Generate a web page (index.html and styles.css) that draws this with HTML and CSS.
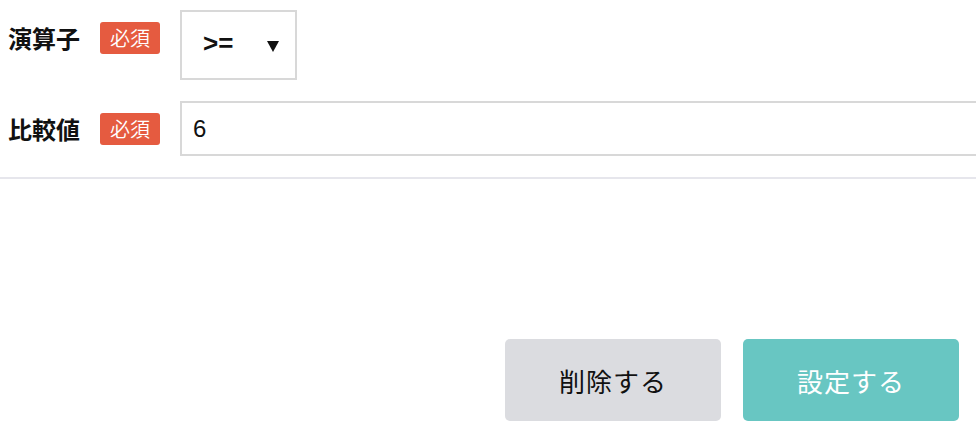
FILE: index.html
```html
<!DOCTYPE html>
<html lang="ja">
<head>
<meta charset="utf-8">
<title>条件設定</title>
<link rel="stylesheet" href="styles.css">
</head>
<body>
<form class="condition" onsubmit="return false">
  <div class="fields">
    <div class="field">
      <div class="field-head">
        <label class="field-label">演算子</label>
        <span class="badge">必須</span>
      </div>
      <div class="select-wrap">
        <select class="select" name="operator">
          <option>&gt;=</option>
          <option>&lt;=</option>
          <option>==</option>
        </select>
      </div>
    </div>
    <div class="field">
      <div class="field-head">
        <label class="field-label">比較値</label>
        <span class="badge">必須</span>
      </div>
      <input class="text-input" type="text" name="value" value="6">
    </div>
  </div>
  <div class="actions">
    <button class="button button-delete" type="button">削除する</button>
    <button class="button button-submit" type="submit">設定する</button>
  </div>
</form>
</body>
</html>
```

FILE: styles.css
```css
body {
  margin: 0;
  font-family: "Liberation Sans", "Noto Sans CJK JP", sans-serif;
  color: #111;
  background: #fff;
  overflow: hidden;
}

.fields {
  padding: 10px 0 21px 8px;
  border-bottom: 2px solid #e6e6ec;
  display: flex;
  flex-direction: column;
  gap: 21px;
}

.field {
  display: flex;
  align-items: flex-start;
}

.field-head {
  height: 55px;
  display: flex;
  align-items: center;
}

.field-label {
  width: 92px;
  font-family: "Noto Sans CJK JP", sans-serif;
  font-size: 24px;
  font-weight: bold;
}

.badge {
  width: 60px;
  height: 32px;
  margin-right: 20px;
  box-sizing: border-box;
  display: flex;
  align-items: center;
  justify-content: center;
  background: #e55b40;
  color: #fff;
  border-radius: 3px;
  font-family: "Noto Sans CJK JP", sans-serif;
  font-size: 20px;
  font-weight: 350;
}

.select-wrap {
  position: relative;
  width: 117px;
  height: 70px;
}

.select-wrap::after {
  content: "";
  position: absolute;
  left: 87px;
  top: 31px;
  border-left: 6px solid transparent;
  border-right: 6px solid transparent;
  border-top: 11px solid #111;
  pointer-events: none;
}

.select {
  appearance: none;
  -webkit-appearance: none;
  width: 100%;
  height: 100%;
  box-sizing: border-box;
  border: 2px solid #d8d8d8;
  border-radius: 0;
  background: #fff;
  padding: 0 0 4px 21px;
  font-family: "Liberation Sans", sans-serif;
  font-size: 26px;
  font-weight: bold;
  color: #111;
}

.text-input {
  flex: 1;
  height: 55px;
  margin-right: -30px;
  box-sizing: border-box;
  border: 2px solid #d8d8d8;
  padding: 0 11px;
  font-family: "Liberation Sans", sans-serif;
  font-size: 24px;
  color: #111;
  outline: none;
}

.actions {
  display: flex;
  justify-content: flex-end;
  gap: 22px;
  padding: 160px 17px 0 0;
}

.button {
  width: 216px;
  height: 82px;
  border: none;
  border-radius: 5px;
  font-family: "Noto Sans CJK JP", sans-serif;
  font-size: 26px;
  letter-spacing: 1px;
}

.button-delete {
  background: #dbdce0;
  color: #111;
}

.button-submit {
  background: #68c6c2;
  color: #fff;
}
```
